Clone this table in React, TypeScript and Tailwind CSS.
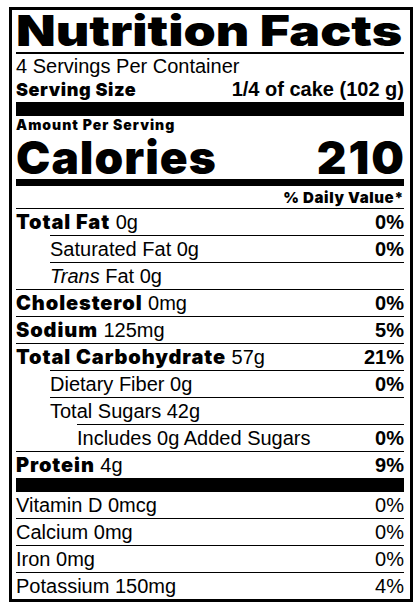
const heavy = "font-['Inter','Liberation_Sans',sans-serif] font-black"

type Row = {
  label: string
  amount: string
  dv?: string
  bold?: boolean
  indent?: 0 | 1 | 2
  italic?: string
}

const nutrients: Row[] = [
  { label: "Total Fat", amount: "0g", dv: "0%", bold: true },
  { label: "Saturated Fat", amount: "0g", dv: "0%", indent: 1 },
  { label: "Fat", amount: "0g", indent: 1, italic: "Trans" },
  { label: "Cholesterol", amount: "0mg", dv: "0%", bold: true },
  { label: "Sodium", amount: "125mg", dv: "5%", bold: true },
  { label: "Total Carbohydrate", amount: "57g", dv: "21%", bold: true },
  { label: "Dietary Fiber", amount: "0g", dv: "0%", indent: 1 },
  { label: "Total Sugars", amount: "42g", indent: 1 },
  { label: "Includes 0g Added Sugars", amount: "", dv: "0%", indent: 2 },
  { label: "Protein", amount: "4g", dv: "9%", bold: true },
]

const vitamins = [
  { label: "Vitamin D 0mcg", dv: "0%" },
  { label: "Calcium 0mg", dv: "0%" },
  { label: "Iron 0mg", dv: "0%" },
  { label: "Potassium 150mg", dv: "4%" },
]

function NutrientRow({ row }: { row: Row }) {
  const indent = row.indent === 2 ? "ml-[61px]" : row.indent === 1 ? "ml-[34px]" : ""
  return (
    <div className={`flex h-[27px] items-baseline justify-between border-t border-black leading-[26px] ${indent}`}>
      <span>
        {row.italic && <i>{row.italic} </i>}
        {row.bold ? <span className={`${heavy} text-[20px] tracking-[0.9px]`}>{row.label}</span> : row.label}
        {row.amount && " " + row.amount}
      </span>
      {row.dv && <span className="font-bold">{row.dv}</span>}
    </div>
  )
}

export default function App() {
  return (
    <div className="min-h-screen bg-white pl-[9px] pt-[7px] font-['Liberation_Sans',Arial,sans-serif] text-[20px] text-black">
      <div className="w-[404px] border-[3px] border-black pl-[4px] pr-[6px]">
        <h1 className={`${heavy} h-[44px] border-b-2 border-black text-[42px] leading-[42px]`}>
          <span className="inline-block origin-left scale-x-[1.23]">Nutrition Facts</span>
        </h1>
        <div className="h-[24px] leading-[24px]">4 Servings Per Container</div>
        <div className="flex h-[24px] items-baseline justify-between leading-[22px]">
          <span className={`${heavy} text-[18px] tracking-[0.6px]`}>Serving Size</span>
          <span className="font-bold">1/4 of cake (102 g)</span>
        </div>
        <div className="h-[14px] bg-black" />
        <div className={`${heavy} h-[16px] text-[14px] leading-[17px] tracking-[1px]`}>Amount Per Serving</div>
        <div className={`${heavy} flex h-[47px] items-baseline justify-between pt-[4px] text-[46px] leading-[43px]`}>
          <span className="tracking-[1px]">Calories</span>
          <span className="-mr-[2px] tracking-[2px]">210</span>
        </div>
        <div className="h-[7px] bg-black" />
        <div className={`${heavy} h-[22px] text-right text-[15px] leading-[24px] tracking-[0.6px]`}>% Daily Value*</div>
        {nutrients.map((r) => (
          <NutrientRow key={r.label} row={r} />
        ))}
        <div className="h-[14px] bg-black" />
        {vitamins.map((v, i) => (
          <div
            key={v.label}
            className={`flex items-baseline justify-between leading-[26px] ${i > 0 ? "h-[27px] border-t border-black" : "h-[26px]"}`}
          >
            <span>{v.label}</span>
            <span>{v.dv}</span>
          </div>
        ))}
      </div>
    </div>
  )
}
